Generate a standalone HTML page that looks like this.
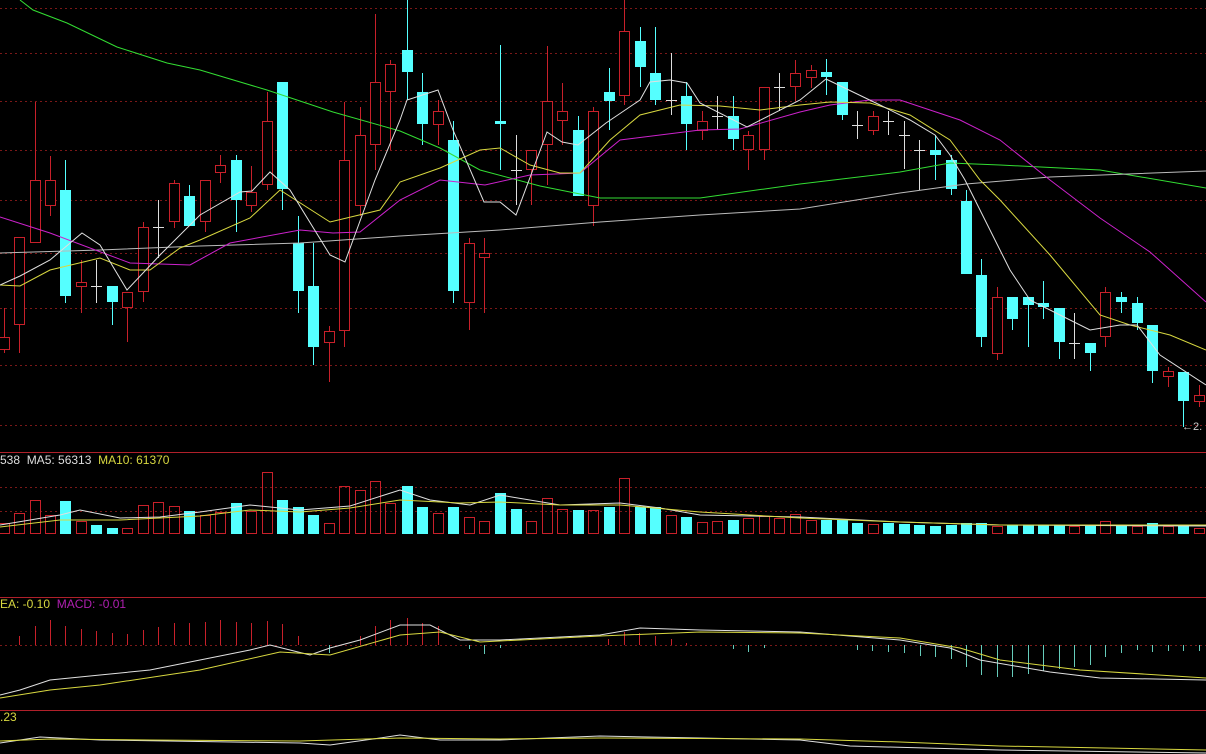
<!DOCTYPE html>
<html><head><meta charset="utf-8"><style>
html,body{margin:0;padding:0;background:#000;width:1206px;height:754px;overflow:hidden}
svg{position:absolute;left:0;top:0}
.t{position:absolute;font-family:"Liberation Sans",sans-serif;font-size:12px;white-space:pre;line-height:13px}
</style></head><body>
<svg id="s" width="1206" height="754" viewBox="0 0 1206 754" xmlns="http://www.w3.org/2000/svg" shape-rendering="crispEdges">
<g id="grid" stroke="#7a1818" stroke-width="1" stroke-dasharray="2,3"></g>
<g stroke="#b0202a" stroke-width="1">
<line x1="0" y1="452.5" x2="1206" y2="452.5"/>
<line x1="0" y1="597.5" x2="1206" y2="597.5"/>
<line x1="0" y1="710.5" x2="1206" y2="710.5"/>
</g>
<g id="c"></g>
<g fill="none" stroke-width="1" shape-rendering="auto">
<polyline stroke="#33dd33" points="20,0 33,10 67,23 117,47 167,63 200,70 267,90 333,112 400,131 440,148 480,170 540,186 600,198 700,198 800,184 900,172 950,163 1000,165 1100,170 1206,188"/>
<polyline stroke="#bbbbbb" points="0,253 100,250 200,246 300,243 400,236 500,230 600,222 700,215 800,209 900,193 966,184 1050,177 1206,171"/>
<polyline stroke="#cc22cc" points="0,217 50,233 130,263 190,265 230,243 300,230 333,233 360,232 400,200 440,180 485,185 530,175 580,173 620,140 700,130 740,129 800,112 830,105 870,100 900,100 960,120 1000,140 1050,180 1100,218 1150,252 1206,302"/>
<polyline stroke="#d8d840" points="0,285 20,286 50,270 100,258 130,270 150,270 180,248 200,240 250,218 280,190 330,222 380,210 400,182 440,168 480,150 500,148 530,165 560,173 580,173 610,140 640,115 680,105 720,106 760,110 800,105 830,102 870,103 910,115 950,140 980,180 1000,200 1050,255 1100,315 1130,325 1170,335 1206,350"/>
<polyline stroke="#e0e0e0" points="0,285 20,276 50,260 82,233 100,245 127,290 160,255 200,215 240,192 252,191 270,172 290,190 330,255 345,262 375,180 400,120 407,100 438,90 453,130 484,202 500,202 516,215 547,132 562,142 578,145 606,123 640,100 650,82 670,80 687,83 700,103 747,127 800,100 826,79 880,105 910,120 935,135 950,155 965,180 990,230 1010,270 1030,300 1060,315 1090,330 1120,325 1137,325 1160,355 1206,385"/>
<polyline stroke="#e0e0e0" points="0,525 60,515 80,510 120,518 160,517 200,512 250,505 300,510 350,506 400,490 430,500 470,505 500,495 560,505 620,503 660,508 700,515 800,517 900,522 1000,525 1206,526"/>
<polyline stroke="#d8d840" points="0,527 60,520 120,520 200,516 250,510 300,512 350,508 400,500 460,503 500,502 560,505 620,505 700,512 800,518 900,522 1000,525 1206,525"/>
<polyline stroke="#e0e0e0" points="0,695 20,690 50,680 100,675 150,670 200,660 250,650 270,645 290,650 310,655 330,648 360,640 400,625 430,625 460,640 500,640 600,635 640,628 700,630 800,632 900,640 950,648 980,660 1050,672 1100,678 1206,680"/>
<polyline stroke="#d8d840" points="0,698 50,690 100,685 200,670 280,652 330,655 400,635 440,632 480,642 600,636 700,632 800,633 900,638 960,648 1000,660 1080,670 1206,678"/>
<polyline stroke="#e0e0e0" points="0,743 40,737 100,740 300,743 330,745 380,738 400,735 440,740 500,740 600,736 700,738 800,740 850,746 1000,750 1206,753"/>
<polyline stroke="#d8d840" points="0,741 50,739 150,740 300,741 400,738 500,739 600,738 800,739 900,742 1000,746 1206,750"/>
</g>
<text x="1182" y="430" fill="#ccc" font-family="Liberation Sans,sans-serif" font-size="11">←2.</text>
</svg>
<div class="t" style="left:0;top:454px"><span style="color:#ddd">538  MA5: 56313  </span><span style="color:#d8d840">MA10: 61370</span></div>
<div class="t" style="left:0;top:598px"><span style="color:#d8d840">EA: -0.10  </span><span style="color:#b020b0">MACD: -0.01</span></div>
<div class="t" style="left:0;top:711px;color:#d8d840">.23</div>
<script>
var NS="http://www.w3.org/2000/svg";
function el(p,n,a){var e=document.createElementNS(NS,n);for(var k in a)e.setAttribute(k,a[k]);p.appendChild(e);return e;}
var g=document.getElementById('grid');
[8,53,101,150,200,253,308,365,425,487,511,645].forEach(function(y){el(g,'line',{x1:0,y1:y+.5,x2:1206,y2:y+.5});});
var c=document.getElementById('c');
var R="#c8202a",C="#55ffff",W="#dddddd";
var K=[
[4,'r',337,350,308,353],[19,'r',237,325,237,353],[35,'r',180,243,102,243],[50,'r',180,206,156,216],[65,'c',190,296,160,303],
[81,'r',282,287,260,313],[96,'w',286,286,260,303],[112,'c',286,302,286,325],[127,'r',292,308,292,342],[143,'r',227,292,222,302],
[158,'w',227,227,200,258],[174,'r',183,222,180,228],[189,'c',196,226,185,226],[205,'r',180,222,180,232],[220,'r',165,173,155,183],
[236,'c',160,200,155,232],[251,'r',192,206,166,212],[267,'r',121,185,92,190],[282,'c',82,189,82,210],[298,'c',243,291,216,313],
[313,'c',286,347,243,365],[329,'r',331,343,326,382],[344,'r',160,331,102,347],[360,'r',135,206,107,216],[375,'r',82,145,14,170],
[390,'r',64,92,60,150],[407,'c',50,72,0,100],[422,'c',92,124,73,145],[438,'r',111,125,100,145],[453,'c',140,291,121,303],
[469,'r',243,303,238,330],[484,'r',253,258,238,313],[500,'c',121,124,45,170],[516,'w',170,170,135,205],[531,'r',150,170,150,205],
[547,'r',101,145,46,185],[562,'r',111,121,83,145],[578,'c',130,196,116,196],[593,'r',111,206,107,226],[609,'c',92,101,68,130],
[624,'r',31,96,0,105],[640,'c',41,67,27,87],[655,'c',73,100,27,105],[671,'w',100,100,53,115],[686,'c',96,124,82,150],
[702,'r',121,131,111,140],[717,'w',116,116,96,130],[733,'c',116,139,96,150],[748,'r',135,150,131,170],[764,'r',87,150,87,160],
[779,'w',87,87,73,111],[795,'r',73,87,60,101],[811,'r',70,78,65,88],[826,'c',72,77,59,95],[842,'c',82,115,82,120],
[857,'w',125,125,111,139],[873,'r',116,131,111,135],[888,'w',121,121,111,135],[904,'w',135,135,121,169],[919,'w',150,150,140,190],
[935,'c',150,155,135,180],[951,'c',160,189,155,195],[966,'c',201,274,190,274],[981,'c',275,337,259,347],[997,'r',297,354,287,360],
[1012,'c',297,319,297,330],[1028,'c',297,305,297,347],[1043,'c',303,307,281,319],[1059,'c',308,342,308,359],[1074,'w',343,343,313,359],
[1090,'c',343,353,343,371],[1105,'r',292,337,287,347],[1121,'c',297,302,292,313],[1137,'c',303,323,297,330],[1152,'c',325,371,325,383],
[1168,'r',371,377,367,387],[1183,'c',372,401,372,427],[1199,'r',395,402,385,407]];
K.forEach(function(k){
 var x=k[0],col=k[1]=='r'?R:k[1]=='c'?C:W;
 el(c,'line',{x1:x+.5,y1:k[4],x2:x+.5,y2:k[5],stroke:col});
 if(k[1]=='w'){el(c,'line',{x1:x-5,y1:k[2]+.5,x2:x+6,y2:k[2]+.5,stroke:col});}
 else if(k[1]=='c'){el(c,'rect',{x:x-5,y:k[2],width:11,height:Math.max(2,k[3]-k[2]),fill:col});}
 else{el(c,'rect',{x:x-4.5,y:k[2]+.5,width:10,height:Math.max(1,k[3]-k[2]-1),fill:'#000',stroke:col});}
});
var V=[[523,'r'],[513,'r'],[500,'r'],[515,'r'],[501,'c'],[521,'r'],[525,'c'],[528,'c'],[528,'r'],[505,'r'],[502,'r'],[506,'r'],[511,'c'],[515,'r'],[512,'r'],[503,'c'],[511,'r'],[472,'r'],[500,'c'],[507,'c'],[515,'c'],[523,'r'],[486,'r'],[490,'r'],[481,'r'],[503,'r'],[486,'c'],[507,'c'],[513,'r'],[507,'c'],[517,'r'],[521,'r'],[493,'c'],[509,'c'],[521,'r'],[498,'r'],[509,'r'],[510,'c'],[510,'r'],
[507,'c'],[478,'r'],[507,'c'],[507,'c'],[515,'r'],[517,'c'],[522,'r'],[521,'r'],[520,'c'],[518,'r'],[516,'r'],[518,'r'],[514,'r'],[520,'r'],[520,'c'],[520,'c'],[523,'c'],[524,'r'],[523,'c'],[524,'c'],[525,'c'],[526,'c'],[525,'c'],[523,'c'],[523,'c'],[526,'r'],[525,'c'],[525,'c'],[525,'c'],[525,'c'],[526,'r'],[526,'c'],[521,'r'],[525,'c'],[526,'r'],[523,'c'],[526,'r'],[525,'c'],[528,'r']];
V.forEach(function(v,i){var x=K[i][0];
 if(v[1]=='c')el(c,'rect',{x:x-5,y:v[0],width:11,height:534-v[0],fill:C});
 else el(c,'rect',{x:x-4.5,y:v[0]+.5,width:10,height:534-v[0]-1,fill:'none',stroke:R});
});
var H={19:636,35:626,50:620,65:626,81:629,96:631,112:633,127:634,143:630,158:627,174:623,189:623,205:622,220:620,236:622,251:623,267:621,282:624,298:636,
360:636,375:626,390:620,407:618,422:623,438:626,608:639,624:632,639:633,655:636,671:639,686:643};
for(var x in H)el(c,'line',{x1:+x+.5,y1:H[x],x2:+x+.5,y2:645,stroke:R});
var D={329:653,469:649,484:654,500:648,733:649,748:652,764:648,857:650,872:651,888:652,904:653,920:656,935:657,951:659,966:667,981:675,997:677,1012:677,1028:674,1043:671,1059:669,1074:667,1090:665,1105:657,1121:653,1137:650,1152:652,1168:651,1183:651,1199:651};
for(var x in D)el(c,'line',{x1:+x+.5,y1:645,x2:+x+.5,y2:D[x],stroke:'#66ccbb'});
</script>
</body></html>
